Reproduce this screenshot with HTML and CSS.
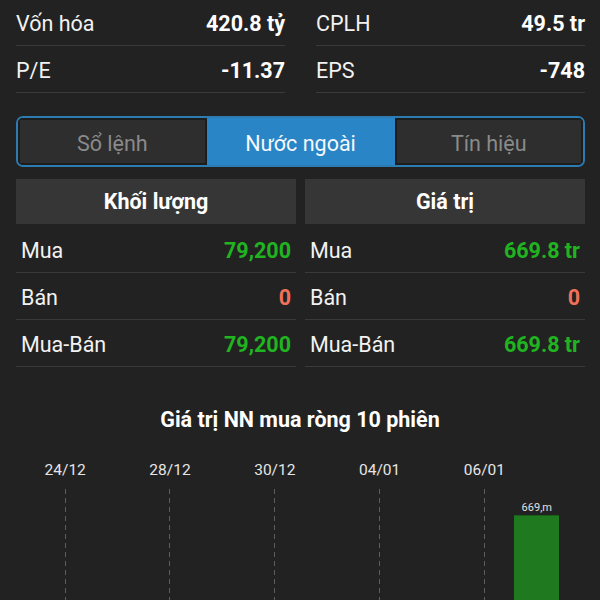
FILE: index.html
```html
<!DOCTYPE html>
<html lang="vi">
<head>
    <meta charset="UTF-8">
    <meta name="viewport" content="width=device-width, initial-scale=1.0">
    <title>Nước ngoài</title>
    <link rel="stylesheet" href="styles.css">
</head>
<body>
    <div class="stats">
        <div class="stat-col">
            <div class="stat"><span>Vốn hóa</span><b>420.8 tỷ</b></div>
            <div class="stat"><span>P/E</span><b>-11.37</b></div>
        </div>
        <div class="stat-col">
            <div class="stat"><span>CPLH</span><b>49.5 tr</b></div>
            <div class="stat"><span>EPS</span><b>-748</b></div>
        </div>
    </div>

    <div class="tabs">
        <div class="tab">Sổ lệnh</div>
        <div class="tab active">Nước ngoài</div>
        <div class="tab">Tín hiệu</div>
    </div>

    <div class="panels">
        <div class="panel">
            <div class="panel-head">Khối lượng</div>
            <div class="row"><span>Mua</span><b class="up">79,200</b></div>
            <div class="row"><span>Bán</span><b class="down">0</b></div>
            <div class="row"><span>Mua-Bán</span><b class="up">79,200</b></div>
        </div>
        <div class="panel">
            <div class="panel-head">Giá trị</div>
            <div class="row"><span>Mua</span><b class="up">669.8 tr</b></div>
            <div class="row"><span>Bán</span><b class="down">0</b></div>
            <div class="row"><span>Mua-Bán</span><b class="up">669.8 tr</b></div>
        </div>
    </div>

    <h2 class="chart-title">Giá trị NN mua ròng 10 phiên</h2>

    <div class="chart">
        <div class="slot"><div class="date">24/12</div><div class="plot"><i class="grid-line"></i></div></div>
        <div class="slot"><div class="date"></div><div class="plot"></div></div>
        <div class="slot"><div class="date">28/12</div><div class="plot"><i class="grid-line"></i></div></div>
        <div class="slot"><div class="date"></div><div class="plot"></div></div>
        <div class="slot"><div class="date">30/12</div><div class="plot"><i class="grid-line"></i></div></div>
        <div class="slot"><div class="date"></div><div class="plot"></div></div>
        <div class="slot"><div class="date">04/01</div><div class="plot"><i class="grid-line"></i></div></div>
        <div class="slot"><div class="date"></div><div class="plot"></div></div>
        <div class="slot"><div class="date">06/01</div><div class="plot"><i class="grid-line"></i></div></div>
        <div class="slot">
            <div class="date"></div>
            <div class="plot bar-plot">
                <div class="bar-label">669,m</div>
                <div class="bar"></div>
            </div>
        </div>
    </div>
</body>
</html>
```

FILE: styles.css
```css
* {
    box-sizing: border-box;
}
body {
    font-family: Roboto, 'Noto Sans', sans-serif;
    margin: 0;
    background-color: #222222;
    color: #f2f2f2;
    height: 600px;
    overflow: hidden;
}
.stats {
    display: flex;
    gap: 31px;
    padding: 0 15px 0 16px;
    margin-top: -1px;
}
.stat-col {
    flex: 1;
}
.stat {
    display: flex;
    justify-content: space-between;
    align-items: center;
    height: 47px;
    padding-top: 2px;
    border-bottom: 1px solid #3a3a3a;
    font-size: 21.5px;
}
.stat b {
    font-weight: 700;
    color: #ffffff;
}
.tabs {
    display: flex;
    margin: 23px 15px 0 16px;
    height: 51px;
    border: 2px solid #2c7bb2;
    border-radius: 7px;
    overflow: hidden;
    background: #1c1c1c;
}
.tab {
    flex: 1;
    display: flex;
    align-items: center;
    justify-content: center;
    padding-top: 3px;
    font-size: 21.5px;
    color: #8a8a8a;
    background: #2e2e2e;
    box-shadow: inset 0 0 0 2px #1d1d1d;
}
.tab.active {
    flex: 0 0 188px;
    background: #2a85c7;
    color: #f4f8fc;
    box-shadow: none;
}
.panels {
    display: flex;
    gap: 9px;
    margin: 12px 15px 0 16px;
}
.panel {
    flex: 1;
}
.panel-head {
    height: 45px;
    display: flex;
    align-items: center;
    justify-content: center;
    background: #363636;
    font-size: 21.5px;
    font-weight: 700;
    color: #ffffff;
    margin-bottom: 2px;
}
.row {
    display: flex;
    justify-content: space-between;
    align-items: center;
    height: 47px;
    padding: 2px 5px 0;
    border-bottom: 1px solid #3a3a3a;
    font-size: 21.5px;
}
.row b {
    font-weight: 700;
}
.up {
    color: #21b421;
}
.down {
    color: #f0715a;
}
.chart-title {
    margin: 40px 0 0;
    text-align: center;
    font-size: 21.5px;
    font-weight: 700;
    color: #ffffff;
}
.chart {
    display: grid;
    grid-template-columns: repeat(10, 1fr);
    margin: 28px 37px 0 39px;
    height: 140px;
}
.slot {
    display: flex;
    flex-direction: column;
}
.date {
    height: 20px;
    line-height: 20px;
    font-size: 15.5px;
    color: #e6e6e6;
    text-align: center;
    white-space: nowrap;
    margin-bottom: 9px;
}
.plot {
    flex: 1;
    display: flex;
    flex-direction: column;
    align-items: center;
}
.grid-line {
    width: 1px;
    flex: 1;
    background: repeating-linear-gradient(to bottom, #5c5c5c 0 5px, transparent 5px 9px);
}
.bar-plot {
    padding-top: 11px;
}
.bar-label {
    font-size: 11px;
    color: #e0e0e0;
    height: 15px;
    line-height: 15px;
}
.bar {
    width: 45px;
    flex: 1;
    background: #1f7a1f;
    border-top: 1px solid #195f19;
}
```
